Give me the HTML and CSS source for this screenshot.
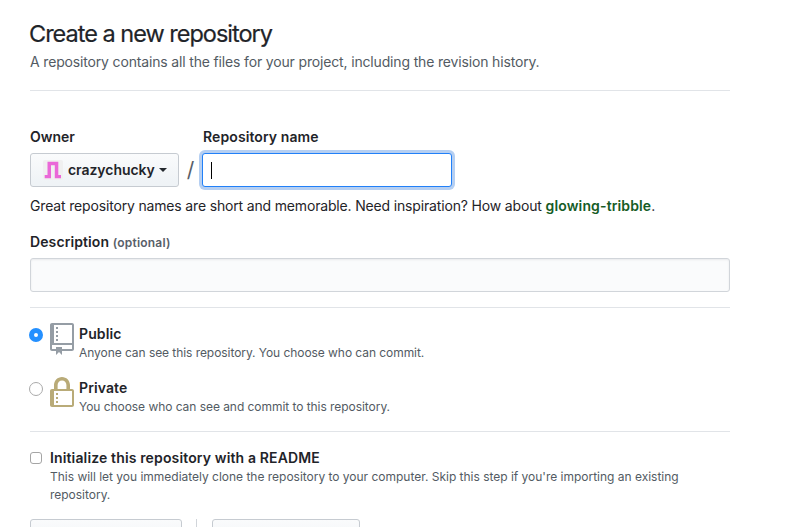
FILE: index.html
```
<!DOCTYPE html>
<html lang="en">
<head>
<meta charset="utf-8">
<title>Create a new repository</title>
<link rel="stylesheet" href="styles.css">
</head>
<body>
<main class="page">
  <header class="head">
    <h1 class="title">Create a new repository</h1>
    <p class="lead">A repository contains all the files for your project, including the revision history.</p>
  </header>
  <form class="form">
    <div class="names">
      <div class="field">
        <span class="label owner-label">Owner</span>
        <button type="button" class="btn owner">
          <svg class="avatar" viewBox="0 0 20 20"><rect width="20" height="20" rx="2" fill="#f0f0f0"/><path fill="#ea68d8" d="M4.500 1.700h10.800V15H18v3.300h-6.200V5.200H8v13.100H1.700V15h2.800z"/></svg>
          <span class="owner-name">crazychucky</span>
          <i class="caret"></i>
        </button>
      </div>
      <span class="slash">/</span>
      <div class="field">
        <span class="label name-label">Repository name</span>
        <div class="input focused"><i class="cursor"></i></div>
      </div>
    </div>
    <p class="hint"><span class="hint-text">Great repository names are short and memorable. Need inspiration? How about</span> <strong class="suggestion">glowing-tribble</strong>.</p>
    <div class="label desc-label">Description <span class="optional">(optional)</span></div>
    <div class="input description"></div>
    <div class="choices">
      <div class="choice">
        <i class="radio checked"></i>
        <svg class="icon repo" viewBox="0 0 12 16"><path d="M4 9H3V8h1v1zm0-3H3v1h1V6zm0-2H3v1h1V4zm0-2H3v1h1V2zm8-1v12c0 .55-.45 1-1 1H6v2l-1.500-1.500L3 16v-2H1c-.55 0-1-.45-1-1V1c0-.55.45-1 1-1h10c.55 0 1 .45 1 1zm-1 10H1v2h2v-1h3v1h5v-2zm0-10H2v9h9V1z"/></svg>
        <div class="choice-text">
          <div class="choice-title public-title">Public</div>
          <div class="note public-note">Anyone can see this repository. You choose who can commit.</div>
        </div>
      </div>
      <div class="choice">
        <i class="radio"></i>
        <svg class="icon lock" viewBox="0 0 12 16"><path d="M4 13H3v-1h1v1zm8-6v7c0 .55-.45 1-1 1H1c-.55 0-1-.45-1-1V7c0-.55.45-1 1-1h1V4c0-2.200 1.800-4 4-4s4 1.800 4 4v2h1c.55 0 1 .45 1 1zM3.800 6h4.410V4c0-1.220-.98-2.200-2.200-2.200-1.220 0-2.200.98-2.200 2.200v2H3.800zM11 7H2v7h9V7zM4 8H3v1h1V8zm0 2H3v1h1v-1z"/></svg>
        <div class="choice-text">
          <div class="choice-title private-title">Private</div>
          <div class="note private-note">You choose who can see and commit to this repository.</div>
        </div>
      </div>
    </div>
    <div class="init">
      <i class="checkbox"></i>
      <div class="init-text">
        <div class="choice-title init-title">Initialize this repository with a README</div>
        <div class="note init-note">This will let you immediately clone the repository to your computer. Skip this step if you're importing an existing<br>repository.</div>
      </div>
    </div>
    <div class="selects">
      <button type="button" class="btn ignore" aria-label="Ignore file"></button>
      <i class="divider"></i>
      <button type="button" class="btn license" aria-label="License"></button>
    </div>
  </form>
</main>
</body>
</html>
```

FILE: styles.css
```
* { box-sizing: border-box; }
html, body { margin: 0; height: 527px; overflow: hidden; background: #fff; }
body { font: 14px/20px Inter, "Liberation Sans", sans-serif; color: #1f2429; }
i { display: block; }
.page { width: 700px; margin-left: 30px; white-space: nowrap; }
.head { height: 91px; padding-top: 16px; border-bottom: 1px solid #e1e4e8; }
.title { margin: 0 0 0 -1px; font-size: 23.5px; line-height: 36px; font-weight: 400; letter-spacing: -1px; -webkit-text-stroke: 0.2px; }
.lead { margin: 0; line-height: 20px; color: #535b63; letter-spacing: -0.16px; }
.names { display: flex; padding-top: 36px; height: 96px; align-items: flex-start; }
.field { display: flex; flex-direction: column; }
.label { font-weight: 600; line-height: 20px; height: 26px; }
.name-label { padding-left: 1px; letter-spacing: 0.1px; }
.btn { height: 34px; border: 1px solid #c6cbd1; border-radius: 3px; background: linear-gradient(#fafbfc, #eff3f6 90%); padding: 0; font: inherit; color: inherit; }
.owner { display: flex; align-items: center; width: 149px; padding-left: 12px; font-weight: 600; }
.avatar { width: 20px; height: 20px; margin-right: 5px; }
.owner-name { letter-spacing: -0.05px; }
.caret { margin-left: 4px; border: 4px solid transparent; border-top-color: #24292e; border-bottom: 0; }
.slash { width: 23px; padding-top: 26px; text-align: center; font-size: 21px; line-height: 34px; color: #586069; }
.input { height: 34px; border: 1px solid #d1d5da; border-radius: 3px; background: #fafbfc; box-shadow: inset 0 1px 2px rgba(27,31,35,.075); }
.focused { width: 250px; padding: 8px; border-color: #2180f8; background: #fff; box-shadow: 0 0 0 3px #b5cff2; }
.cursor { width: 1px; height: 17px; background: #000; }
.hint { margin: 0; padding-top: 9px; line-height: 20px; }
.hint-text { letter-spacing: -0.165px; }
.suggestion { font-weight: 600; color: #165c26; letter-spacing: 0.13px; }
.desc-label { margin-top: 16px; letter-spacing: 0.1px; }
.optional { font-size: 12px; color: #586069; letter-spacing: 0.2px; }
.choices { margin-top: 15px; padding-top: 15px; height: 125px; border-top: 1px solid #e1e4e8; border-bottom: 1px solid #e1e4e8; }
.choice { display: flex; height: 54px; }
.radio { width: 14px; height: 14px; margin: 5px 7px 0 -1px; border: 1px solid #aaa; border-radius: 50%; }
.checked { border: 5px solid #2490ff; }
.icon { width: 24px; height: 32px; margin-right: 5px; }
.repo { fill: #959da5; }
.lock { fill: #b9ab78; }
.choice-title { font-weight: 600; line-height: 20px; letter-spacing: 0.1px; }
.choice-text { padding-top: 1px; }
.note { font-size: 12px; line-height: 18px; color: #535b63; }
.public-note { letter-spacing: -0.06px; }
.private-note { letter-spacing: -0.05px; }
.init-note { letter-spacing: -0.015px; }
.init-title { letter-spacing: 0.14px; }
.init { display: flex; padding-top: 16px; height: 87px; }
.checkbox { width: 12px; height: 12px; margin: 4px 8px 0 0; border: 1px solid #a5a5a5; border-radius: 3px; }
.selects { display: flex; }
.ignore { width: 152px; }
.divider { width: 1px; height: 34px; margin: 0 15px 0 14px; background: #d1d5da; }
.license { width: 148px; }
```
